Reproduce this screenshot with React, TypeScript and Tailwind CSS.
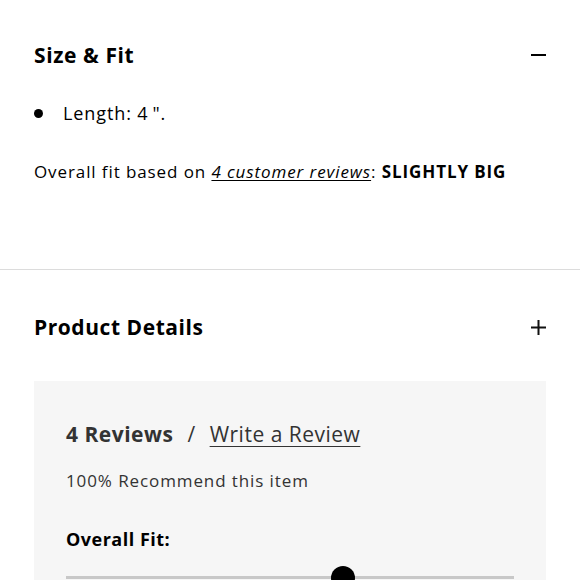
export default function App() {
  return (
    <div className="w-[580px] h-[580px] overflow-hidden bg-white text-black font-['Open_Sans','Lato',sans-serif]">
      {/* Size & Fit */}
      <section className="px-[34px] pt-[38px] pb-[84px]">
        <div className="flex items-center justify-between">
          <h2 className="text-[21px] font-bold leading-[34px] tracking-[0.6px]">Size &amp; Fit</h2>
          <span className="block w-[15px] h-[2px] bg-black" />
        </div>
        <ul className="mt-[28px]">
          <li className="flex items-center gap-[20px] text-[18px] leading-[26px] tracking-[0.9px]">
            <span className="block w-[9px] h-[9px] rounded-full bg-black" />
            <span>Length: 4&thinsp;".</span>
          </li>
        </ul>
        <p className="mt-[33px] text-[17px] leading-[26px] tracking-[0.9px]">
          Overall fit based on{" "}
          <a href="#" className="italic underline underline-offset-2">
            4 customer reviews
          </a>
          : <span className="font-bold">SLIGHTLY BIG</span>
        </p>
      </section>

      <div className="border-t border-[#dcdcdc]" />

      {/* Product Details */}
      <section className="px-[34px] pt-[40px]">
        <div className="flex items-center justify-between">
          <h2 className="text-[21px] font-bold leading-[34px] tracking-[0.55px]">Product Details</h2>
          <svg width="15" height="15" viewBox="0 0 15 15">
            <path d="M7.5 0v15M0 7.5h15" stroke="#111" strokeWidth="2" />
          </svg>
        </div>

        <div className="mt-[37px] bg-[#f6f6f6] px-[32px] pt-[38px] pb-[40px]">
          <div className="flex items-baseline text-[21px] text-[#333] leading-[30px] tracking-[0.5px]">
            <span className="font-bold">4 Reviews</span>
            <span className="mx-[14px]">/</span>
            <a href="#" className="underline underline-offset-4 decoration-1">
              Write a Review
            </a>
          </div>
          <p className="mt-[19px] text-[17px] text-[#333] leading-[26px] tracking-[0.9px]">
            100% Recommend this item
          </p>
          <p className="mt-[32px] text-[18px] font-bold leading-[26px] tracking-[0.5px]">Overall Fit:</p>
          <div className="relative mt-[24px] h-[3px] bg-[#c8c8c8]">
            <span className="absolute left-[59.2%] -top-[10px] w-[24px] h-[24px] rounded-full bg-black" />
          </div>
        </div>
      </section>
    </div>
  );
}
